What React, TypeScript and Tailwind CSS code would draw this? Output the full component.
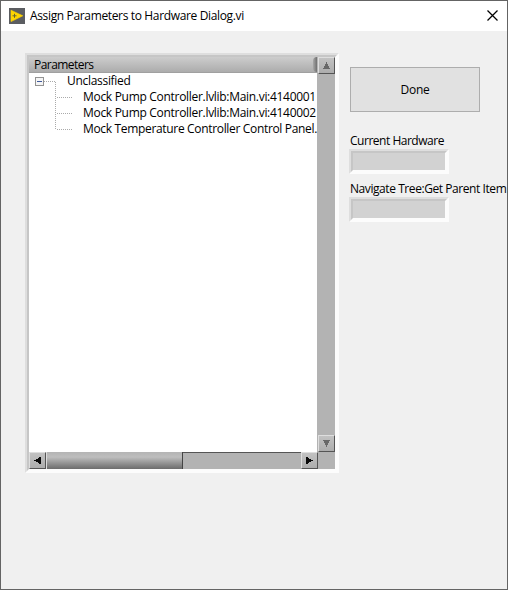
import React from "react";

const OUTER_BEVEL = "border-2 border-t-[#dedede] border-l-[#dedede] border-r-[#fcfcfc] border-b-[#fcfcfc]";
const INNER_BEVEL = "border-2 border-t-[#c6c6c6] border-l-[#c6c6c6] border-r-[#fcfcfc] border-b-[#fcfcfc]";

type Direction = "up" | "down" | "left" | "right";

const ARROWS: Record<Direction, string> = {
  up: "M8 5h1v2h1v2h1v2h1v1H5v-1h1V9h1V7h1z",
  down: "M5 5h7v1h-1v2h-1v2H9v2H8v-2H7V8H6V6H5z",
  left: "M5 8h2V7h2V6h1V5h2v7h-2v-1H9v-1H7V9H5z",
  right: "M5 5h2v1h1v1h2v1h2v1h-2v1H8v1H7v1H5z",
};

function ArrowButton({ direction, disabled = false }: { direction: Direction; disabled?: boolean }) {
  return (
    <button className="flex h-[17px] w-[17px] shrink-0 border border-t-[#dedede] border-l-[#dedede] border-r-[#555] border-b-[#555] bg-linear-to-b from-[#c2c2c2] to-[#adadad]">
      <svg className="-m-px h-[17px] w-[17px] shrink-0" viewBox="0 0 17 17" shapeRendering="crispEdges">
        <path d={ARROWS[direction]} fill={disabled ? "#686868" : "#0a0a0a"} />
      </svg>
    </button>
  );
}

function Indicator({ label, className, labelClass }: { label: string; className: string; labelClass: string }) {
  return (
    <div className={className}>
      <div className={`ml-px h-4 leading-4 whitespace-nowrap ${labelClass}`}>{label}</div>
      <div className={`h-[25px] w-[100px] ${OUTER_BEVEL}`}>
        <div className={`h-full bg-[#d2d2d2] ${INNER_BEVEL}`} />
      </div>
    </div>
  );
}

export default function App() {
  return (
    <div className="flex h-[590px] w-[508px] flex-col overflow-hidden border border-[#646464] bg-[#f0f0f0] font-['Open_Sans',sans-serif] text-[12px] text-black">
      <header className="flex h-[30px] shrink-0 items-center bg-white pr-[9px] pl-2">
        <svg className="h-4 w-4" viewBox="0 0 16 16">
          <path d="M0 0h16v16H0z" fill="#5b5d61" />
          <path d="M2 2.2 13.8 7.8 2 13.6z" fill="#ffd500" stroke="#ffd500" strokeWidth=".6" />
          <path d="M3.5 7.8h4M5.5 5.8v4" stroke="#66652e" strokeWidth="1" />
        </svg>
        <h1 className="ml-[5px] tracking-[-0.35px] whitespace-nowrap">Assign Parameters to Hardware Dialog.vi</h1>
        <svg className="mb-px ml-auto h-[11px] w-[11px]" viewBox="0 0 11 11">
          <path d="m.5.5 10 10m0-10-10 10" stroke="#000" strokeWidth="1.25" />
        </svg>
      </header>

      <main className="flex pt-[22px] pl-6">
        <section className={`h-[420px] w-[314px] ${OUTER_BEVEL}`}>
          <div className={`flex h-full ${INNER_BEVEL}`}>
            <div className="flex w-[288px] flex-col bg-white">
              <div className="flex h-4 items-center border-b border-[#a0a0a0] bg-linear-to-b from-[#cdcdcd] to-[#acacac]">
                <span className="pt-px pl-[5px] tracking-[-0.55px]">Parameters</span>
                <span className="ml-auto h-full w-1 rounded-l bg-linear-to-r from-[#a8a8a8] to-[#707070]" />
              </div>
              <div className="flex h-[379px] overflow-hidden">
                <svg className="h-[70px] w-[54px] shrink-0" viewBox="0 0 54 70" fill="none" shapeRendering="crispEdges">
                  <path d="M15 8.5h12M26.5 9v48M28 24.5h16M28 40.5h16M28 56.5h16" stroke="#aaa" strokeDasharray="1 1" />
                  <rect x="6.5" y="4.5" width="8" height="8" fill="#f5f5f5" stroke="#929292" />
                  <path d="M8 8.5h5" stroke="#405a9c" />
                </svg>
                <ul className="-ml-4 leading-4 whitespace-nowrap">
                  <li className="tracking-[-0.3px]">Unclassified</li>
                  <li className="pl-4 tracking-[-0.3px]">Mock Pump Controller.lvlib:Main.vi:4140001</li>
                  <li className="pl-4 tracking-[-0.3px]">Mock Pump Controller.lvlib:Main.vi:4140002</li>
                  <li className="pl-4 tracking-[-0.33px]">Mock Temperature Controller Control Panel.</li>
                </ul>
              </div>
              <div className="relative z-10 flex h-[17px] w-[289px] bg-[#b3b3b3]">
                <ArrowButton direction="left" />
                <div className="h-[17px] w-[137px] border-r border-l border-l-[#ddd] border-r-[#444] bg-linear-to-b from-[#b4b4b4] via-[#bebebe] via-30% to-[#6c6c6c]" />
                <div className="flex-1 border-t border-[#555]" />
                <ArrowButton direction="right" />
              </div>
            </div>
            <div className="flex w-[18px] flex-col items-end bg-[#b3b3b3]">
              <ArrowButton direction="up" disabled />
              <div className="flex-1" />
              <ArrowButton direction="down" disabled />
              <div className="h-[17px]" />
            </div>
          </div>
        </section>

        <aside className="ml-[10px] pt-[14px]">
          <button className="ml-px h-[45px] w-[130px] border border-[#adadad] bg-[#e1e1e1] tracking-[-0.2px]">Done</button>
          <Indicator label="Current Hardware" className="mt-[21px]" labelClass="tracking-[-0.48px]" />
          <Indicator label="Navigate Tree:Get Parent Item" className="mt-[7px]" labelClass="tracking-[-0.43px]" />
        </aside>
      </main>
    </div>
  );
}
